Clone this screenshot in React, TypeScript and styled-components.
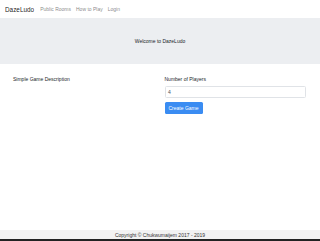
import React from "react";
import styled, { createGlobalStyle } from "styled-components";

const Global = createGlobalStyle`
  html, body { margin: 0; padding: 0; background: #fff; }
  body { font-family: "Liberation Sans", Arial, sans-serif; color: #212529; }
  * { box-sizing: border-box; }
`;

const Page = styled.div`
  min-height: 241px;
  display: flex;
  flex-direction: column;
`;

const Navbar = styled.nav`
  height: 18px;
  display: flex;
  align-items: center;
  padding: 0 5px;
  gap: 6px;
  background: #fff;
`;

const Brand = styled.span`
  font-size: 6.4px;
  color: rgba(0, 0, 0, 0.9);
`;

const NavLinks = styled.div`
  display: flex;
  gap: 5px;
`;

const NavLink = styled.a`
  font-size: 5px;
  color: rgba(0, 0, 0, 0.5);
  text-decoration: none;
`;

const Jumbotron = styled.section`
  height: 46px;
  background: #eceef1;
  display: flex;
  align-items: center;
  justify-content: center;
  font-size: 5px;
`;

const Row = styled.div`
  display: grid;
  grid-template-columns: 1fr 1fr;
  padding: 11.5px 14px 0 13px;
  flex: 1;
`;

const Description = styled.div`
  font-size: 5px;
  line-height: 7.5px;
  padding-top: 0.5px;
`;

const Form = styled.div`
  display: flex;
  flex-direction: column;
  align-items: flex-start;
  padding-left: 5px;
`;

const Label = styled.label`
  font-size: 5px;
  line-height: 7.5px;
  margin-bottom: 2.5px;
`;

const Input = styled.div`
  width: 141px;
  height: 12px;
  border: 0.5px solid #e0e3e7;
  border-radius: 1.5px;
  font-size: 5px;
  display: flex;
  align-items: center;
  padding-left: 2.5px;
  color: #495057;
  margin-bottom: 4.5px;
`;

const Button = styled.button`
  height: 11.5px;
  padding: 0 4px;
  border: none;
  border-radius: 1.5px;
  background: #3a8cf2;
  color: #fff;
  font-family: inherit;
  font-size: 5px;
  cursor: pointer;
`;

const Footer = styled.footer`
  height: 11px;
  background: #f2f2f2;
  display: flex;
  align-items: center;
  justify-content: center;
  font-size: 5px;
  color: #333;
  border-bottom: 2px solid #222;
`;

export default function App() {
  return (
    <>
      <Global />
      <Page>
        <Navbar>
          <Brand>DazeLudo</Brand>
          <NavLinks>
            <NavLink href="#">Public Rooms</NavLink>
            <NavLink href="#">How to Play</NavLink>
            <NavLink href="#">Login</NavLink>
          </NavLinks>
        </Navbar>
        <Jumbotron>Welcome to DazeLudo</Jumbotron>
        <Row>
          <Description>Simple Game Description</Description>
          <Form>
            <Label>Number of Players</Label>
            <Input>4</Input>
            <Button>Create Game</Button>
          </Form>
        </Row>
        <Footer>Copyright © Chukwumaijem 2017 - 2019</Footer>
      </Page>
    </>
  );
}
